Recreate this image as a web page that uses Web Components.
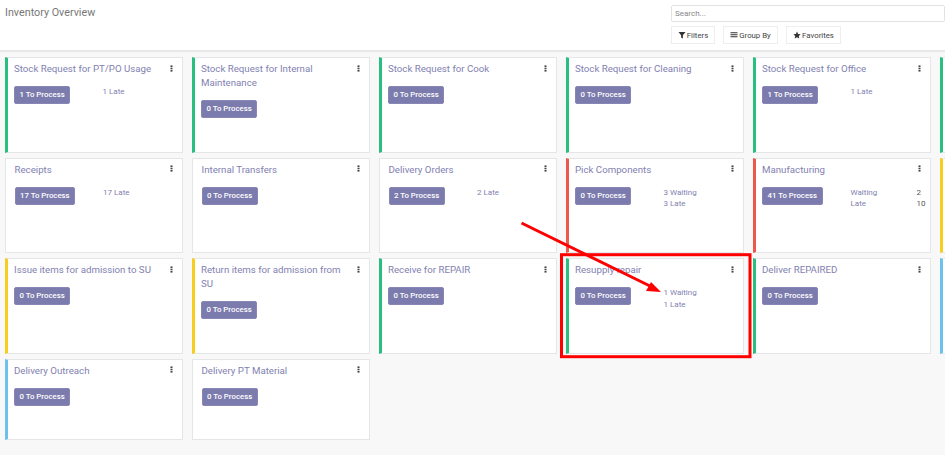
<!DOCTYPE html>
<html>
<head>
<meta charset="utf-8">
<style>
  html, body { margin: 0; height: 100%; overflow: hidden; background: #f8f8f8; }
  body { font-family: Roboto, "Liberation Sans", sans-serif; color: #777; }
</style>
</head>
<body>
<inv-page>
  <inv-header slot="header"></inv-header>
  <inv-card color="#28bf7f" name="Stock Request for PT/PO Usage" todo="1" late="1 Late"></inv-card>
  <inv-card color="#28bf7f" name="Stock Request for Internal Maintenance" todo="0"></inv-card>
  <inv-card color="#28bf7f" name="Stock Request for Cook" todo="0"></inv-card>
  <inv-card color="#28bf7f" name="Stock Request for Cleaning" todo="0"></inv-card>
  <inv-card color="#28bf7f" name="Stock Request for Office" todo="1" late="1 Late"></inv-card>
  <inv-card color="#28bf7f"></inv-card>

  <inv-card name="Receipts" todo="17" late="17 Late"></inv-card>
  <inv-card name="Internal Transfers" todo="0"></inv-card>
  <inv-card name="Delivery Orders" todo="2" late="2 Late"></inv-card>
  <inv-card color="#f0574c" name="Pick Components" todo="0" waiting="3 Waiting" late="3 Late"></inv-card>
  <inv-card color="#f0574c" name="Manufacturing" todo="41" waiting="Waiting" late="Late" wcount="2" lcount="10"></inv-card>
  <inv-card color="#f7cd1f"></inv-card>

  <inv-card color="#f7cd1f" name="Issue items for admission to SU" todo="0"></inv-card>
  <inv-card color="#f7cd1f" name="Return items for admission from SU" todo="0"></inv-card>
  <inv-card color="#28bf7f" name="Receive for REPAIR" todo="0"></inv-card>
  <inv-card color="#28bf7f" name="Resupply repair" todo="0" waiting="1 Waiting" late="1 Late"></inv-card>
  <inv-card color="#28bf7f" name="Deliver REPAIRED" todo="0"></inv-card>
  <inv-card color="#6cc1ed"></inv-card>

  <inv-card color="#6cc1ed" name="Delivery Outreach" todo="0"></inv-card>
  <inv-card name="Delivery PT Material" todo="0"></inv-card>
</inv-page>
<script>
class InvPage extends HTMLElement {
  constructor() {
    super();
    let root = this.attachShadow({mode: 'open'});
    root.innerHTML = `
      <style>
        :host { display: block; position: relative; width: 945px; height: 455px; overflow: hidden; }
        .grid {
          display: grid;
          grid-template-columns: repeat(6, 178px);
          grid-template-rows: 95.5px 95.5px 95.5px 81px;
          column-gap: 9px;
          row-gap: 5px;
          padding: 5px 0 0 5px;
        }
        svg { position: absolute; left: 0; top: 0; }
      </style>
      <slot name="header"></slot>
      <div class="grid"><slot></slot></div>
      <svg width="945" height="455" viewBox="0 0 945 455">
        <rect x="561.5" y="254.7" width="188.5" height="102" fill="none" stroke="#fe0000" stroke-width="3"/>
        <line x1="521.5" y1="223" x2="652" y2="287" stroke="#fe0000" stroke-width="3"/>
        <polygon points="661,292 646,291 651,282" fill="#fe0000"/>
      </svg>
    `;
  }
}
customElements.define('inv-page', InvPage);

class InvHeader extends HTMLElement {
  constructor() {
    super();
    let root = this.attachShadow({mode: 'open'});
    root.innerHTML = `
      <style>
        :host { display: flex; justify-content: space-between; height: 50px;
                background: #fff; border-bottom: 2px solid #e8e8e8; }
        h1 { margin: 0; padding: 6px 0 0 5px; font-size: 10.75px; font-weight: 400; line-height: 13px; color: #777; }
        .right { width: 274px; padding: 5px 0 0 0; margin-left: auto; }
        .search { height: 17px; box-sizing: border-box; border: 1px solid #e2e2e2; border-radius: 2px;
                  padding-left: 3px; font-size: 8px; line-height: 15px; color: #888; }
        .btns { display: flex; gap: 8px; margin-top: 4px; }
        .btn { display: flex; align-items: center; justify-content: center; gap: 1px; height: 18px; box-sizing: border-box;
               border: 1px solid #eee; font-size: 7.8px; color: #444; background: #fff; }
        .btn:nth-child(1) { width: 44px; }
        .btn:nth-child(2) { width: 55px; }
        .btn:nth-child(3) { width: 55px; }
        svg { width: 8px; height: 8px; fill: #333; display: block; }
      </style>
      <h1>Inventory Overview</h1>
      <div class="right">
        <div class="search">Search...</div>
        <div class="btns">
          <div class="btn"><svg viewBox="0 0 8 8"><path d="M0.5 1H7.5L4.9 4.2V7.5L3.1 6.5V4.2Z"/></svg>Filters</div>
          <div class="btn"><svg viewBox="0 0 8 8"><path d="M0.5 1.2H7.5V2.2H0.5ZM0.5 3.2H7.5V4.2H0.5ZM0.5 5.2H7.5V6.2H0.5Z"/></svg>Group By</div>
          <div class="btn"><svg viewBox="0 0 8 8"><path d="M4 0.5L5.1 2.9L7.7 3.2L5.8 5L6.3 7.6L4 6.3L1.7 7.6L2.2 5L.3 3.2L2.9 2.9Z"/></svg>Favorites</div>
        </div>
      </div>
    `;
  }
}
customElements.define('inv-header', InvHeader);

class InvCard extends HTMLElement {
  constructor() {
    super();
    this.attachShadow({mode: 'open'});
  }
  connectedCallback() {
    let color = this.getAttribute('color');
    let name = this.getAttribute('name') || '';
    let todo = this.getAttribute('todo');
    let waiting = this.getAttribute('waiting');
    let late = this.getAttribute('late');
    let wcount = this.getAttribute('wcount');
    let lcount = this.getAttribute('lcount');
    let row = (label, count) => `<div class="row"><span>${label}</span>${count ? `<b>${count}</b>` : ''}</div>`;
    this.shadowRoot.innerHTML = `
      <style>
        :host { display: block; box-sizing: border-box; background: #fff; border: 1px solid #e4e6e8; position: relative;
                padding: 4px 9px 0 ${color ? 6 : 8.5}px;
                border-left: ${color ? `3.5px solid ${color}` : '1px solid #e4e6e8'}; }
        .top { display: flex; justify-content: space-between; }
        .name { width: 146px; font-size: 9.7px; line-height: 14.2px; color: #8281b1; }
        .dots { display: block; width: 3px; height: 7px; margin: 2.5px 0 0 0; fill: #444; }
        .body { display: flex; margin-top: 10px; }
        .left { width: 88.5px; flex: none; }
        .todo { width: max-content; height: 18px; box-sizing: border-box; border-radius: 2px; background: #7c7bad; border: 1px solid #8786b5;
                padding: 0 4.6px; color: #fff; font-size: 7.8px; font-weight: 500; line-height: 16px; text-align: center; white-space: nowrap; }
        .info { font-size: 8px; line-height: 11.7px; color: #8281b1; flex: 1; }
        .row { display: flex; }
        .row span { min-width: 66px; }
        .row b { font-weight: 400; color: #555; }
      </style>
      ${name ? `
      <div class="top"><div class="name">${name}</div><svg class="dots" viewBox="0 0 3 7"><rect x="0.5" y="0.4" width="2" height="1.6"/><rect x="0.5" y="2.7" width="2" height="1.6"/><rect x="0.5" y="5" width="2" height="1.6"/></svg></div>
      <div class="body">
        <div class="left"><div class="todo">${todo} To Process</div></div>
        <div class="info">${waiting ? row(waiting, wcount) : ''}${late ? row(late, lcount) : ''}</div>
      </div>` : ''}
    `;
  }
}
customElements.define('inv-card', InvCard);
</script>
</body>
</html>
